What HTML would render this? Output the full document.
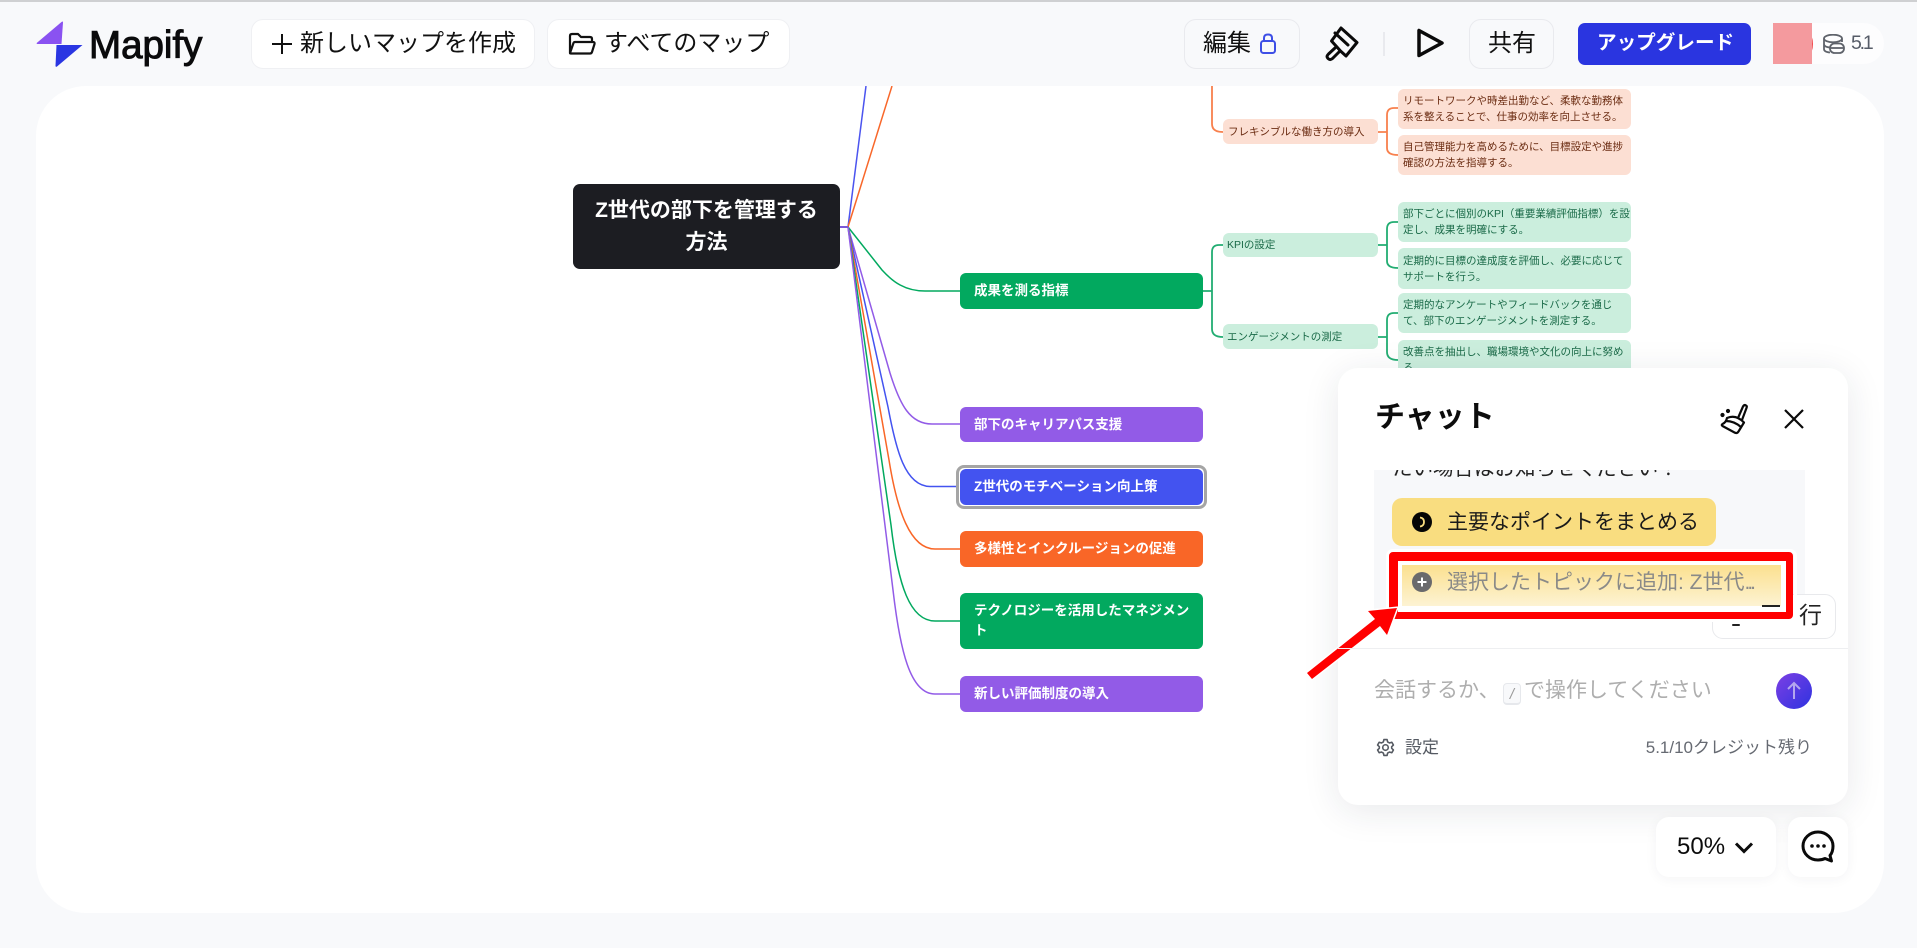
<!DOCTYPE html>
<html lang="ja"><head><meta charset="utf-8"><title>Mapify</title>
<style>
html,body{margin:0;padding:0;width:1917px;height:948px;overflow:hidden;background:#f8f9fb;font-family:"Liberation Sans","Noto Sans CJK JP",sans-serif;color:#111}
.a{position:absolute;box-sizing:border-box}
.btn{background:#fff;border:1px solid #eff0f3;border-radius:12px}
.t{position:absolute;white-space:nowrap;line-height:1.2}
.n{position:absolute;box-sizing:border-box;border-radius:6px;color:#fff;font-weight:700;font-size:13.5px;line-height:20px;padding:0 14px;display:flex;align-items:center;white-space:nowrap;left:960px;width:243px}
.s{position:absolute;box-sizing:border-box;border-radius:6px;font-size:10.5px;line-height:16px;white-space:nowrap;display:flex;align-items:center}
.o{background:#fcdfd3;color:#6b2c12}.g{background:#cbeedd;color:#1a6a48}
.l1{left:1223px;width:155px;padding-left:5px}
.l2{left:1398px;width:233px;padding-left:5px}
</style></head><body>
<div class="a" style="left:0;top:0;width:1917px;height:2px;background:#cfd0d2"></div>

<!-- logo -->
<svg class="a" style="left:34px;top:20px" width="52" height="50" viewBox="0 0 52 50">
<path d="M29 2.500 27.500 24H3.500q-1.500 0-.5-1.200L27.500 2q1.600-1.200 1.500.5Z" fill="#8a52f1"/>
<path d="M48.500 25 23 46.500q-1.500 1-1.500-.7L22.500 25Z" fill="#2a36e2"/>
</svg>
<div class="t" style="left:89px;top:23px;font-size:38.500px;font-weight:400;color:#0b0b0c;-webkit-text-stroke:1px #0b0b0c">Mapify</div>

<div class="a btn" style="left:251px;top:19px;width:284px;height:50px"></div>
<svg class="a" style="left:271px;top:33px" width="22" height="22" viewBox="0 0 22 22"><path d="M11 1v20M1 11h20" stroke="#111" stroke-width="2" fill="none"/></svg>
<div class="t" style="left:300px;top:30px;font-size:24px">新しいマップを作成</div>

<div class="a btn" style="left:547px;top:19px;width:243px;height:50px"></div>
<svg class="a" style="left:568px;top:32px" width="28" height="24" viewBox="0 0 28 24"><path d="M2 21V4q0-2 2-2h6l3 3h9q2 0 2 2v3M2 21l3.500-10q.5-1 1.500-1h18q2 0 1.500 2L24 20q-.5 1.500-2 1.500H3Q2 21.500 2 21Z" fill="none" stroke="#111" stroke-width="2.200" stroke-linejoin="round"/></svg>
<div class="t" style="left:604px;top:30px;font-size:24px">すべてのマップ</div>

<div class="a btn" style="left:1184px;top:19px;width:116px;height:50px;background:#f8f9fb;border-color:#e9eaee"></div>
<div class="t" style="left:1203px;top:30px;font-size:24px">編集</div>
<svg class="a" style="left:1259px;top:33px" width="18" height="21" viewBox="0 0 18 21"><rect x="2" y="8" width="14" height="12" rx="2.500" fill="none" stroke="#3e4fe6" stroke-width="2"/><path d="M5 8V5q0-3.500 4-3.500t4 3.500v3" fill="none" stroke="#3e4fe6" stroke-width="2"/></svg>

<svg class="a" style="left:1324px;top:24px" width="38" height="40" viewBox="0 0 38 40" fill="none" stroke="#0a0a0a" stroke-width="3" stroke-linejoin="round" stroke-linecap="round">
<path d="M17 4 33 18.500 22 32 16.500 27 12.500 22.500 7.500 17Z"/><path d="M11 9 24 21"/><path d="M11 24 4.500 30q-2.500 2.500-.5 4.500t4.500 0L15 28"/>
</svg>
<div class="a" style="left:1383px;top:32px;width:2px;height:24px;background:#e9eaee"></div>
<svg class="a" style="left:1415px;top:27px" width="30" height="32" viewBox="0 0 30 32"><path d="M4 3.500v25L27 16Z" fill="none" stroke="#0a0a0a" stroke-width="3.500" stroke-linejoin="round"/></svg>

<div class="a btn" style="left:1469px;top:19px;width:85px;height:50px;background:#f8f9fb;border-color:#e9eaee"></div>
<div class="t" style="left:1488px;top:30px;font-size:24px">共有</div>

<div class="a" style="left:1578px;top:23px;width:173px;height:42px;background:#2a35e0;border-radius:7px"></div>
<div class="t" style="left:1597px;top:32px;font-size:19.600px;font-weight:700;color:#fff">アップグレード</div>

<div class="a" style="left:1773px;top:23px;width:111px;height:41px;background:#fdfdfe;border-radius:21px"></div>
<div class="a" style="left:1805px;top:34px;width:8px;height:20px;border-radius:50%;background:#f24b4e"></div>
<div class="a" style="left:1773px;top:23px;width:39px;height:41px;background:#f49a9e"></div>
<svg class="a" style="left:1823px;top:34px" width="22" height="20" viewBox="0 0 22 20" fill="none" stroke="#5f636b" stroke-width="1.800"><ellipse cx="10" cy="4.500" rx="9" ry="3.800"/><path d="M1 4.500V15q0 3 6 3.500M1 10q0 3 6 3.500M19 4.500V8"/><rect x="7" y="9.500" width="14" height="9.500" rx="4.500"/><path d="M7 14h14"/></svg>
<div class="t" style="left:1851px;top:32px;font-size:19.500px;color:#565c68;letter-spacing:-2.200px">5.1</div>

<!-- canvas -->
<div class="a" style="left:36px;top:86px;width:1848px;height:827px;background:#fff;border-radius:50px"></div>

<!-- lines -->
<svg class="a" style="left:0;top:0;overflow:hidden" width="1917" height="913" viewBox="0 0 1917 913" fill="none" stroke-width="1.500">
<defs><clipPath id="c"><rect x="36" y="86" width="1848" height="827" rx="50"/></clipPath></defs>
<g clip-path="url(#c)">
<path d="M848 227 866 86" stroke="#4b54ef"/>
<path d="M848 227 892 86" stroke="#f8672a"/>
<path d="M848 227 882 270C893 282 905 291 925 291H960" stroke="#02a95f"/>
<path d="M848 227 890 373C900 405 910 424 932 424H960" stroke="#925be7"/>
<path d="M848 227 888 407C896 450 905 486 930 486.500H958" stroke="#4353f0"/>
<path d="M848 227 889 460C897 510 910 549 935 549H960" stroke="#f96627"/>
<path d="M848 227 891 525C898 585 910 621 935 621H960" stroke="#02a95f"/>
<path d="M848 227 893 590C900 650 910 694 935 694H960" stroke="#925be7"/>
<path d="M840 227H848" stroke="#7a58d8" stroke-width="2"/>
<g stroke-width="1.800">
<path d="M1212 86V124Q1212 132 1223 132" stroke="#f8804d"/>
<path d="M1378 132H1387M1398 108H1394Q1387 108 1387 115V148Q1387 155 1398 155" stroke="#f8804d"/>
<path d="M1203 291H1212M1223 245H1219Q1212 245 1212 252V329Q1212 337 1223 337" stroke="#22ad72"/>
<path d="M1378 245H1387M1398 222H1394Q1387 222 1387 229V261Q1387 268 1398 268" stroke="#22ad72"/>
<path d="M1378 337H1387M1398 313H1394Q1387 313 1387 320V352Q1387 360 1398 360" stroke="#22ad72"/>
</g></g></svg>

<!-- nodes -->
<div class="a" style="left:573px;top:184px;width:267px;height:85px;background:#1c1d22;border-radius:7px;color:#fff;font-weight:700;font-size:21px;line-height:32px;text-align:center;padding-top:10.500px;white-space:nowrap">Z世代の部下を管理する<br>方法</div>
<div class="n" style="top:273px;height:36px;background:#02a95f">成果を測る指標</div>
<div class="n" style="top:407px;height:35px;background:#925be7">部下のキャリアパス支援</div>
<div class="a" style="left:956px;top:465px;width:251px;height:44px;border:3px solid #a5a5a5;border-radius:8px;background:#fff"></div>
<div class="n" style="top:469px;height:36px;background:#4353f0">Z世代のモチベーション向上策</div>
<div class="n" style="top:531px;height:36px;background:#f96627">多様性とインクルージョンの促進</div>
<div class="n" style="top:593px;height:56px;background:#02a95f">テクノロジーを活用したマネジメン<br>ト</div>
<div class="n" style="top:676px;height:36px;background:#925be7">新しい評価制度の導入</div>

<div class="s o l1" style="top:119px;height:25px">フレキシブルな働き方の導入</div>
<div class="s o l2" style="top:89px;height:40px">リモートワークや時差出勤など、柔軟な勤務体<br>系を整えることで、仕事の効率を向上させる。</div>
<div class="s o l2" style="top:135px;height:40px">自己管理能力を高めるために、目標設定や進捗<br>確認の方法を指導する。</div>
<div class="s g l1" style="top:233px;height:24px;padding-left:4px">KPIの設定</div>
<div class="s g l1" style="top:324px;height:25px;padding-left:4px">エンゲージメントの測定</div>
<div class="s g l2" style="top:202px;height:40px">部下ごとに個別のKPI（重要業績評価指標）を設<br>定し、成果を明確にする。</div>
<div class="s g l2" style="top:248px;height:41px">定期的に目標の達成度を評価し、必要に応じて<br>サポートを行う。</div>
<div class="s g l2" style="top:293px;height:40px">定期的なアンケートやフィードバックを通じ<br>て、部下のエンゲージメントを測定する。</div>
<div class="s g l2" style="top:340px;height:40px">改善点を抽出し、職場環境や文化の向上に努め<br>る。</div>

<!-- chat -->
<div class="a" style="left:1338px;top:368px;width:510px;height:437px;background:#fff;border-radius:20px;box-shadow:0 6px 36px rgba(30,35,60,.10)"></div>
<div class="t" style="left:1375px;top:400px;font-size:30px;font-weight:700;color:#0c0c0c">チャット</div>
<svg class="a" style="left:1716px;top:402px" width="34" height="34" viewBox="0 0 34 34" fill="none" stroke="#0a0a0a" stroke-width="2.200" stroke-linecap="round" stroke-linejoin="round">
<path d="M22 16 27 4.500q1.200-2 2.800-1.200t.7 2.700L26 18"/><path d="M11 16Q20 12 28 20.500L22.500 29.500Q21 32 18.500 30.500L6.500 24Q5 23 6.500 22Q10 20.500 11 16Z"/><path d="M10 19Q18 19 25 25"/>
<circle cx="12" cy="9" r="1" fill="#0a0a0a"/><circle cx="6.500" cy="13" r="1" fill="#0a0a0a"/></svg>
<svg class="a" style="left:1783px;top:409px" width="22" height="20" viewBox="0 0 22 20"><path d="M2 1 20 19M20 1 2 19" stroke="#0a0a0a" stroke-width="2.200" fill="none"/></svg>

<div class="a" style="left:1374px;top:470px;width:431px;height:142px;background:#f7f8fa;overflow:hidden">
<div class="t" style="left:18px;top:-13px;font-size:20.500px;color:#222">たい場合はお知らせください！</div>
</div>
<div class="a" style="left:1392px;top:498px;width:324px;height:48px;background:#f9dd80;border-radius:10px"></div>
<svg class="a" style="left:1412px;top:512px" width="20" height="20" viewBox="0 0 20 20"><circle cx="10" cy="10" r="10" fill="#050505"/><path d="M8 5.500q4 .5 4 4.500t-4 4.500" stroke="#f9dd80" stroke-width="1.800" fill="none"/></svg>
<div class="t" style="left:1447px;top:510px;font-size:21px;color:#1a1a1a">主要なポイントをまとめる</div>

<!-- run button -->
<div class="a" style="left:1712px;top:594px;width:124px;height:45px;background:#fff;border:1px solid #e8e9ec;border-radius:11px"></div>
<div class="a" style="left:1732px;top:624px;width:8px;height:2px;background:#222;border-radius:1px"></div>
<div class="t" style="left:1799px;top:602px;font-size:23px;color:#222">行</div>

<!-- highlight -->
<div class="a" style="left:1386px;top:549px;width:411px;height:73px;border:3px solid #fff;border-radius:7px"></div>
<div class="a" style="left:1389px;top:552px;width:404px;height:67px;border:solid #ff0000;border-width:9px 7px 7px 9px;border-radius:4px"></div>
<div class="a" style="left:1398px;top:561px;width:388px;height:51px;background:#fff"></div>
<div class="a" style="left:1402px;top:565px;width:379px;height:41px;background:linear-gradient(#fbe08f,#fdf3d3)"></div>
<div class="a" style="left:1762px;top:605px;width:18px;height:2px;background:#222"></div>
<svg class="a" style="left:1412px;top:572px" width="20" height="20" viewBox="0 0 20 20"><circle cx="10" cy="10" r="10" fill="#6a6a6c"/><path d="M10 5.500v9M5.500 10h9" stroke="#fff" stroke-width="2" fill="none"/></svg>
<div class="t" style="left:1447px;top:570px;font-size:21px;color:#8a8a88">選択したトピックに追加: Z世代<span style="letter-spacing:-3px">...</span></div>

<!-- arrow -->
<svg class="a" style="left:1295px;top:595px" width="115" height="95" viewBox="1295 595 115 95">
<path d="M1397 608 1368 611 1375 619 1307 673 1312 679 1380 626 1387 635Z" fill="#ff0000" stroke="#fff" stroke-width="3" paint-order="stroke" stroke-linejoin="miter"/></svg>

<div class="a" style="left:1338px;top:648px;width:510px;height:1px;background:#eeeff1"></div>
<div class="t" style="left:1374px;top:678px;font-size:21px;color:#aeaeae">会話するか、</div>
<div class="a" style="left:1503px;top:683px;width:18px;height:22px;background:#f8f9fb;border:1px solid #e6e8ec;border-bottom-width:2px;border-radius:4px;text-align:center;font-size:15px;line-height:21px;font-style:italic;color:#999">/</div>
<div class="t" style="left:1524px;top:678px;font-size:21px;color:#aeaeae">で操作してください</div>
<div class="a" style="left:1776px;top:673px;width:36px;height:36px;border-radius:50%;background:linear-gradient(135deg,#7c40e4,#2e32e0)"></div>
<svg class="a" style="left:1785px;top:681px" width="18" height="20" viewBox="0 0 18 20"><path d="M9 18V2M3 8l6-6 6 6" fill="none" stroke="#b4a6ee" stroke-width="2"/></svg>
<svg class="a" style="left:1376px;top:738px" width="19" height="19" viewBox="0 0 24 24" fill="none" stroke="#555a62" stroke-width="2" stroke-linejoin="round"><path d="M10 2h4l.7 3 2.300 1.300 3-.9 2 3.500-2.200 2.100v2l2.200 2.100-2 3.500-3-.9L14.700 19l-.7 3h-4l-.7-3L7 17.700l-3 .9-2-3.500L4.200 13v-2L2 8.900l2-3.500 3 .9L9.300 5Z"/><circle cx="12" cy="12" r="3.500"/></svg>
<div class="t" style="left:1405px;top:738px;font-size:17px;color:#555a62">設定</div>
<div class="t" style="right:105px;top:738px;font-size:17px;color:#666a72">5.1/10クレジット残り</div>

<div class="a" style="left:1656px;top:817px;width:120px;height:60px;background:#fff;border-radius:13px;box-shadow:0 2px 12px rgba(30,35,60,.05)"></div>
<div class="t" style="left:1677px;top:833px;font-size:24px;color:#0c0c0c">50%</div>
<svg class="a" style="left:1734px;top:841px" width="20" height="13" viewBox="0 0 20 13"><path d="M2 2.500 10 10.500 18 2.500" fill="none" stroke="#0c0c0c" stroke-width="3"/></svg>
<div class="a" style="left:1788px;top:817px;width:60px;height:60px;background:#fff;border-radius:13px;box-shadow:0 2px 12px rgba(30,35,60,.05)"></div>
<svg class="a" style="left:1801px;top:830px" width="34" height="33" viewBox="0 0 34 33"><path d="M17 2C8.500 2 2 8.500 2 16s6.500 14 15 14q4 0 7-1.500l6.500 2.500-1.500-5.500Q32 22 32 16C32 8.500 25.500 2 17 2Z" fill="none" stroke="#0a0a0a" stroke-width="3" stroke-linejoin="round"/><circle cx="11" cy="16" r="1.800" fill="#0a0a0a"/><circle cx="17" cy="16" r="1.800" fill="#0a0a0a"/><circle cx="23" cy="16" r="1.800" fill="#0a0a0a"/></svg>
</body></html>
